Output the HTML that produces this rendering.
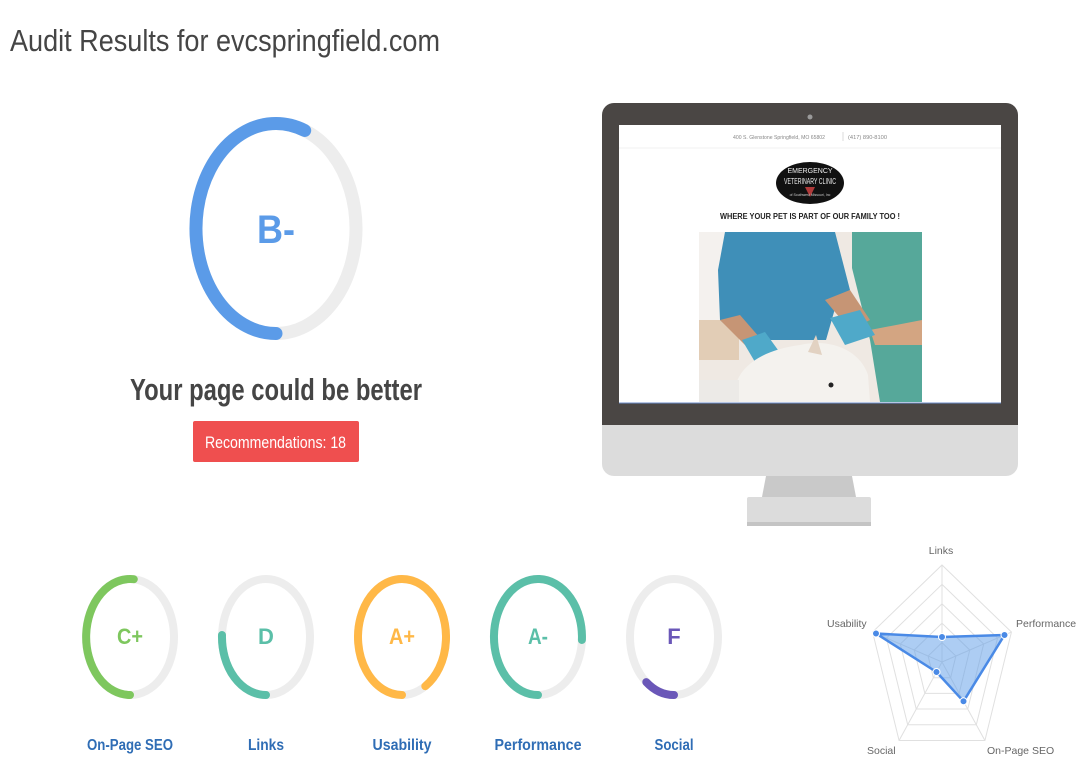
<!DOCTYPE html>
<html><head><meta charset="utf-8"><style>
html,body{margin:0;padding:0;background:#fff;width:1080px;height:768px;overflow:hidden}
svg{display:block}
text{font-family:"Liberation Sans",sans-serif}
</style></head><body>
<svg width="1080" height="768" viewBox="0 0 1080 768" xmlns="http://www.w3.org/2000/svg">
<!-- Title -->
<text x="10" y="51" font-size="31" fill="#454545" textLength="430" lengthAdjust="spacingAndGlyphs">Audit Results for evcspringfield.com</text>

<!-- Main gauge -->
<ellipse cx="276" cy="228.5" rx="80" ry="105" fill="none" stroke="#ededed" stroke-width="13"/>
<path d="M276,333.5 A80,105 0 1 1 304.7,130.5" fill="none" stroke="#5b9be8" stroke-width="13" stroke-linecap="round"/>
<text x="276" y="243" font-size="40" font-weight="bold" fill="#5b9be8" text-anchor="middle" textLength="38" lengthAdjust="spacingAndGlyphs">B-</text>

<text x="130" y="400" font-size="31" font-weight="bold" fill="#454545" textLength="292" lengthAdjust="spacingAndGlyphs">Your page could be better</text>
<rect x="193" y="421" width="166" height="41" rx="2" fill="#ef4f4f"/>
<text x="205" y="448" font-size="17" fill="#fff" textLength="141" lengthAdjust="spacingAndGlyphs">Recommendations: 18</text>

<!-- Monitor -->
<rect x="602" y="103" width="416" height="373" rx="12" fill="#dcdcdc"/>
<path d="M614,103 H1006 A12,12 0 0 1 1018,115 V425 H602 V115 A12,12 0 0 1 614,103Z" fill="#4a4644"/>
<circle cx="810" cy="117" r="2.5" fill="#9a9a9a"/>
<rect x="619" y="125" width="382" height="278" fill="#fff"/>
<line x1="619" y1="403" x2="1001" y2="403" stroke="#6c8ecb" stroke-width="1"/>
<path d="M766,476 H852 L856,497 H762Z" fill="#c9c9c9"/>
<rect x="747" y="497" width="124" height="29" rx="2" fill="#dcdcdc"/>
<rect x="747" y="522" width="124" height="4" fill="#c4c4c4"/>
<!-- screen content -->
<text x="733" y="139" font-size="5.5" fill="#888" textLength="92" lengthAdjust="spacingAndGlyphs">400 S. Glenstone Springfield, MO 65802</text>
<line x1="843" y1="132" x2="843" y2="141" stroke="#ccc" stroke-width="0.7"/>
<text x="848" y="139" font-size="5.5" fill="#888" textLength="39" lengthAdjust="spacingAndGlyphs">(417) 890-8100</text>
<line x1="619" y1="148" x2="1001" y2="148" stroke="#f2f2f2"/>
<ellipse cx="810" cy="183" rx="34" ry="21" fill="#111"/>
<text x="810" y="173" font-size="7" fill="#eee" text-anchor="middle" font-family="Liberation Serif">EMERGENCY</text>
<text x="810" y="184" font-size="8" fill="#eee" text-anchor="middle" font-family="Liberation Serif" textLength="52" lengthAdjust="spacingAndGlyphs">VETERINARY CLINIC</text>
<path d="M805,187 L815,187 L810,197Z" fill="#b03a3a"/>
<text x="810" y="196" font-size="3.5" fill="#ccc" text-anchor="middle">of Southwest Missouri, Inc</text>
<text x="810" y="219" font-size="8" font-weight="bold" fill="#222" text-anchor="middle" textLength="180" lengthAdjust="spacingAndGlyphs">WHERE YOUR PET IS PART OF OUR FAMILY TOO !</text>
<!-- photo -->
<rect x="699" y="232" width="223" height="170" fill="#efe9e3"/>
<rect x="699" y="232" width="50" height="90" fill="#f4f1ee"/>
<rect x="699" y="320" width="40" height="40" fill="#e2cdb6"/>
<path d="M725,232 H835 L850,290 L838,298 L826,340 H742 L720,320 L718,270Z" fill="#3f8fb8"/>
<path d="M852,232 H922 V402 H880 L870,340 L860,300 L852,268Z" fill="#56a89a"/>
<path d="M720,320 L745,345 L760,338 L740,315Z" fill="#c69575"/>
<path d="M825,300 L850,290 L870,320 L850,330Z" fill="#c69575"/>
<path d="M870,330 L922,320 V345 L875,345Z" fill="#d3a582"/>
<path d="M742,340 L765,332 L778,350 L755,362Z" fill="#4fa9c9"/>
<path d="M830,318 L860,310 L875,335 L845,345Z" fill="#4fa9c9"/>
<path d="M735,402 C730,370 760,350 800,345 C830,338 860,350 868,375 L870,402Z" fill="#f4f2ee"/>
<path d="M808,352 L816,335 L822,355Z" fill="#e2d2c2"/>
<circle cx="831" cy="385" r="2.5" fill="#222"/>
<rect x="699" y="380" width="40" height="22" fill="#eceae7"/>

<!-- Small gauges -->
<g fill="none" stroke-width="8" stroke-linecap="round">
<ellipse cx="130" cy="637" rx="44" ry="58" stroke="#ededed"/>
<path d="M130,695 A44,58 0 1 1 133.8,579.2" stroke="#7ec75e"/>
<ellipse cx="266" cy="637" rx="44" ry="58" stroke="#ededed"/>
<path d="M266,695 A44,58 0 0 1 222,635" stroke="#5bbfa8"/>
<ellipse cx="402" cy="637" rx="44" ry="58" stroke="#ededed"/>
<path d="M402,695 A44,58 0 1 1 425.3,686.2" stroke="#ffb847"/>
<ellipse cx="538" cy="637" rx="44" ry="58" stroke="#ededed"/>
<path d="M538,695 A44,58 0 1 1 581.9,640" stroke="#5bbfa8"/>
<ellipse cx="674" cy="637" rx="44" ry="58" stroke="#ededed"/>
<path d="M674,695 A44,58 0 0 1 646.3,682.1" stroke="#6a57b8"/>
</g>
<g font-size="22" font-weight="bold" text-anchor="middle">
<text x="130" y="644" fill="#7ec75e" textLength="26" lengthAdjust="spacingAndGlyphs">C+</text>
<text x="266" y="644" fill="#5bbfa8">D</text>
<text x="402" y="644" fill="#ffb847" textLength="26" lengthAdjust="spacingAndGlyphs">A+</text>
<text x="538" y="644" fill="#5bbfa8" textLength="20" lengthAdjust="spacingAndGlyphs">A-</text>
<text x="674" y="644" fill="#6a57b8">F</text>
</g>
<g font-size="16" font-weight="bold" fill="#2f6db5" text-anchor="middle">
<text x="130" y="750" textLength="86" lengthAdjust="spacingAndGlyphs">On-Page SEO</text>
<text x="266" y="750" textLength="36" lengthAdjust="spacingAndGlyphs">Links</text>
<text x="402" y="750" textLength="59" lengthAdjust="spacingAndGlyphs">Usability</text>
<text x="538" y="750" textLength="87" lengthAdjust="spacingAndGlyphs">Performance</text>
<text x="674" y="750" textLength="39" lengthAdjust="spacingAndGlyphs">Social</text>
</g>

<!-- Radar -->
<g transform="translate(942,662) scale(73,97)" fill="none" stroke="#e0e0e0">
<polygon vector-effect="non-scaling-stroke" points="0,-1 0.951,-0.309 0.588,0.809 -0.588,0.809 -0.951,-0.309"/>
<polygon vector-effect="non-scaling-stroke" points="0,-0.8 0.761,-0.247 0.470,0.647 -0.470,0.647 -0.761,-0.247"/>
<polygon vector-effect="non-scaling-stroke" points="0,-0.6 0.571,-0.185 0.353,0.485 -0.353,0.485 -0.571,-0.185"/>
<polygon vector-effect="non-scaling-stroke" points="0,-0.4 0.380,-0.124 0.235,0.324 -0.235,0.324 -0.380,-0.124"/>
<polygon vector-effect="non-scaling-stroke" points="0,-0.2 0.190,-0.062 0.118,0.162 -0.118,0.162 -0.190,-0.062"/>
<path vector-effect="non-scaling-stroke" d="M0,0 L0,-1 M0,0 L0.951,-0.309 M0,0 L0.588,0.809 M0,0 L-0.588,0.809 M0,0 L-0.951,-0.309"/>
</g>
<polygon points="942,637 1004.5,635 963.5,701.3 936.5,672 876,633.5" fill="rgba(91,155,232,0.5)" stroke="#4a8ae6" stroke-width="2.5" stroke-linejoin="round"/>
<g fill="#4a8ae6" stroke="#fff" stroke-width="1">
<circle cx="942" cy="637" r="3.5"/><circle cx="1004.5" cy="635" r="3.5"/><circle cx="963.5" cy="701.3" r="3.5"/><circle cx="936.5" cy="672" r="3.5"/><circle cx="876" cy="633.5" r="3.5"/>
</g>
<g font-size="10.5" fill="#666">
<text x="941" y="554" text-anchor="middle">Links</text>
<text x="827" y="627">Usability</text>
<text x="1016" y="627">Performance</text>
<text x="867" y="754">Social</text>
<text x="987" y="754">On-Page SEO</text>
</g>
</svg>
</body></html>
